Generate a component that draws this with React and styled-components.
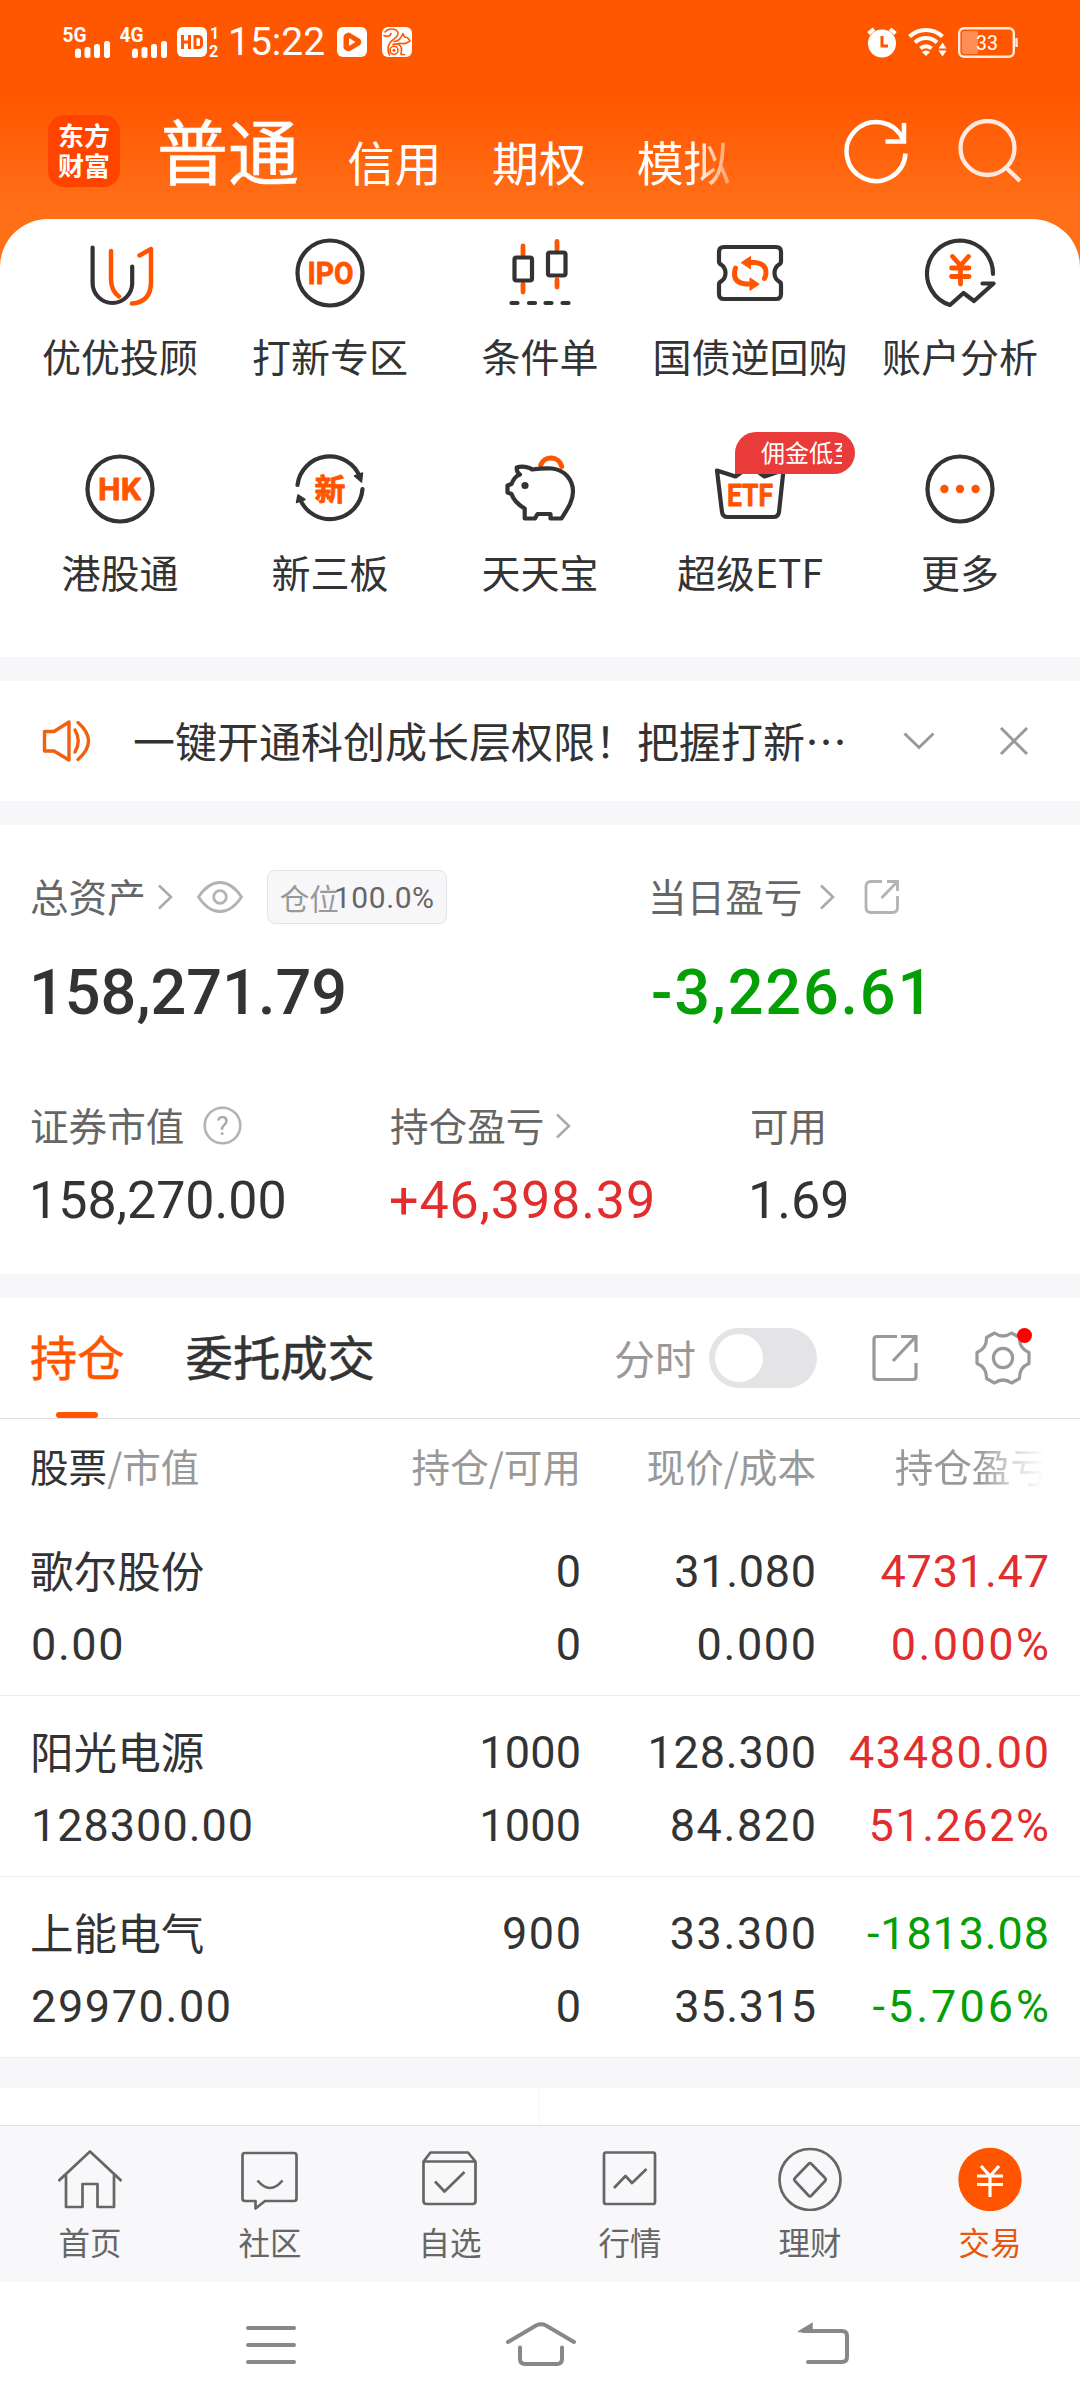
import React from "react";
import styled, { createGlobalStyle, css } from "styled-components";

const CJK = `"Noto Sans CJK SC", "Noto Sans", sans-serif`;
const NUM = `Roboto, "Noto Sans CJK SC", sans-serif`;

const ORANGE = "#ff5500";
const INK = "#333333";
const GRAY = "#999999";
const MID = "#666666";
const RED = "#e12d2d";
const GREEN = "#049f04";

const GlobalStyle = createGlobalStyle`
  *, *::before, *::after { box-sizing: border-box; }
  body { margin: 0; background: #ffffff; font-family: ${CJK}; color: ${INK}; }
  svg { display: block; flex: none; }
`;

const Screen = styled.div`
  width: 1080px;
  height: 2408px;
  overflow: hidden;
  display: flex;
  flex-direction: column;
  background: #fff;
`;

/* ---------- header ---------- */

const Header = styled.header`
  height: 279px;
  flex: none;
  background: linear-gradient(180deg, #ff5700 0, #ff5700 98px, #ff6f18 205px, #ff6f18 100%);
`;

const StatusBar = styled.div`
  height: 84px;
  padding: 0 62px 0 63px;
  display: flex;
  align-items: center;
  justify-content: space-between;
  color: #fff;
`;

const StatusGroup = styled.div`
  display: flex;
  align-items: center;
  gap: ${(p) => p.$gap || 0}px;
`;

const Clock = styled.span`
  font: 400 39px/48px ${NUM};
  margin: 0 12px 0 5px;
`;

const AccountBar = styled.div`
  height: 135px;
  padding: 0 58px 0 48px;
  display: flex;
  align-items: center;
`;

const Logo = styled.div`
  width: 72px;
  height: 72px;
  flex: none;
  margin-bottom: 1px;
  padding-bottom: 2px;
  border-radius: 16px;
  background: #ff4400;
  color: #fff;
  display: flex;
  flex-direction: column;
  align-items: center;
  justify-content: center;
  font: 700 26px/30px ${CJK};
`;

const AccountTabs = styled.nav`
  flex: 1;
  margin-left: 37px;
  padding-top: 4px;
  display: flex;
  align-items: baseline;
  gap: 50.5px;
  color: #fff;
`;

const AccountTab = styled.span`
  font-family: ${CJK};
  font-weight: 400;
  font-size: ${(p) => (p.$active ? 71 : 47)}px;
  line-height: 80px;
  ${(p) =>
    p.$active
      ? css`
          margin-right: -2px;
          -webkit-text-stroke: 0.6px #fff;
        `
      : css`
          padding-top: 2px;
          transform: translateY(1.5px);
        `}
  ${(p) =>
    p.$fade &&
    css`
      mask-image: linear-gradient(90deg, #000 60%, rgba(0, 0, 0, 0.35) 100%);
    `}
`;

const HeaderActions = styled.div`
  display: flex;
  align-items: center;
  gap: 46px;
`;

/* ---------- services ---------- */

const Services = styled.section`
  flex: none;
  height: 438px;
  margin-top: -60px;
  padding: 18px 15px 0;
  border-radius: 48px 48px 0 0;
  background: #fff;
  display: grid;
  grid-template-columns: repeat(5, 210px);
  grid-template-rows: 216px 216px;
`;

const Service = styled.div`
  display: flex;
  flex-direction: column;
  align-items: center;
  gap: 25.5px;
`;

const ServiceIcon = styled.div`
  position: relative;
  width: 72px;
  height: 72px;
`;

const ServiceLabel = styled.span`
  font: 400 39px/40px ${CJK};
  white-space: nowrap;
`;

const Badge = styled.span`
  position: absolute;
  left: 21px;
  top: -21px;
  width: 120px;
  height: 42px;
  padding: 0 13px 0 26px;
  border-radius: 21px 21px 21px 0;
  background: #ea3b3b;
`;

const BadgeText = styled.span`
  display: block;
  overflow: hidden;
  white-space: nowrap;
  color: #fff;
  font: 400 24px/39px ${CJK};
`;

const Gap = styled.div`
  flex: none;
  height: ${(p) => p.$h}px;
  background: #f7f7fa;
`;

/* ---------- notice ---------- */

const Notice = styled.section`
  flex: none;
  height: 120px;
  padding: 0 51px 0 42px;
  display: flex;
  align-items: center;
`;

const NoticeText = styled.p`
  flex: 1;
  margin: 0 0 2px 41px;
  font: 400 42px/60px ${CJK};
  white-space: nowrap;
`;

const NoticeActions = styled.div`
  display: flex;
  align-items: center;
  gap: 64px;
`;

/* ---------- assets ---------- */

const Assets = styled.section`
  flex: none;
  height: 449px;
  padding: 44px 31px 0;
`;

const Split = styled.div`
  display: grid;
  grid-template-columns: ${(p) => p.$cols};
  margin-top: ${(p) => p.$top || 0}px;
`;

const Metric = styled.div`
  display: flex;
  flex-direction: column;
`;

const MetricHead = styled.div`
  height: 55px;
  display: flex;
  align-items: center;
  color: ${MID};
  font: 400 38.6px/50px ${CJK};
  white-space: nowrap;
`;

const MetricLabel = styled.span`
  margin: 0 ${(p) => p.$gap || 0}px 4px -1px;
`;

const MetricValue = styled.div`
  font-family: ${NUM};
  font-weight: ${(p) => (p.$big ? 500 : 400)};
  font-size: ${(p) => (p.$big ? 63 : 52)}px;
  line-height: ${(p) => (p.$big ? 70 : 60)}px;
  margin-top: ${(p) => (p.$big ? 34 : 18)}px;
  color: ${(p) => p.$color || INK};
  letter-spacing: ${(p) => p.$track || 0}px;
  margin-left: ${(p) => (p.$shift === undefined ? -2 : p.$shift)}px;
`;

const Spacer = styled.span`
  width: ${(p) => p.$w}px;
  flex: none;
`;

const Position = styled.span`
  width: 180px;
  height: 54px;
  margin-left: 24px;
  padding-left: 12px;
  border: 1.5px solid #e2e3e6;
  border-radius: 8px;
  background: #f7f7fa;
  display: flex;
  align-items: center;
  font: 400 29.5px/48px ${CJK};
  color: ${GRAY};
`;

const PositionRate = styled.span`
  margin: 2px 0 0 -5px;
  font: 400 30px/50px ${NUM};
  letter-spacing: 0.6px;
  color: ${MID};
`;

/* ---------- holdings ---------- */

const TabBar = styled.div`
  flex: none;
  height: 121px;
  padding: 0 48px 0 31px;
  border-bottom: 1.5px solid #dddddf;
  display: flex;
  align-items: stretch;
`;

const Tab = styled.div`
  margin-right: 62px;
  display: flex;
  flex-direction: column;
  align-items: center;
  justify-content: space-between;
  color: ${(p) => (p.$active ? ORANGE : INK)};
  font: 400 47.3px/70px ${CJK};
  -webkit-text-stroke: 0.5px currentColor;
  padding-top: 23px;
  margin-left: -1px;

  &::after {
    content: "";
    width: 42px;
    height: 6px;
    border-radius: 3px;
    background: ${(p) => (p.$active ? ORANGE : "transparent")};
  }
`;

const Tools = styled.div`
  margin-left: auto;
  display: flex;
  align-items: center;
  height: 120px;
`;

const ToolLabel = styled.span`
  font: 400 41px/60px ${CJK};
  color: ${GRAY};
  margin: 0 13px 3px 0;
`;

const Toggle = styled.span`
  width: 108px;
  height: 60px;
  margin-right: 55px;
  padding: 6px;
  border-radius: 30px;
  background: #e4e4e7;

  &::before {
    content: "";
    display: block;
    width: 48px;
    height: 48px;
    border-radius: 50%;
    background: #fff;
  }
`;

const SettingsButton = styled.span`
  position: relative;
  margin-left: 56px;
`;

const Dot = styled.i`
  position: absolute;
  right: 0;
  top: -2px;
  width: 15px;
  height: 15px;
  border-radius: 50%;
  background: #ff0000;
`;

const columns = css`
  display: grid;
  grid-template-columns: 320px 230px 235px 233px;
  padding: 0 31px;
`;

const TableHead = styled.div`
  ${columns}
  flex: none;
  height: 96px;
  font: 400 38.6px/93px ${CJK};
  color: ${GRAY};
  white-space: nowrap;
`;

const HeadCell = styled.span`
  text-align: ${(p) => (p.$left ? "left" : "right")};
  margin-left: ${(p) => (p.$left ? -1 : 0)}px;
  ${(p) =>
    p.$fade &&
    css`
      mask-image: linear-gradient(90deg, #000 70%, rgba(0, 0, 0, 0.35) 86%, transparent 98%);
    `}
`;

const Strong = styled.span`
  color: ${INK};
`;

const Row = styled.div`
  ${columns}
  flex: none;
  height: 181px;
  padding-top: 21px;
  border-bottom: 1.5px solid #ececee;
`;

const Cell = styled.div`
  display: flex;
  flex-direction: column;
  align-items: ${(p) => (p.$left ? "flex-start" : "flex-end")};
  color: ${(p) => p.$color || INK};
  white-space: nowrap;
`;

const FigureText = styled.span`
  font: 400 45px/72.5px ${NUM};
  letter-spacing: ${(p) => p.$track}px;
  margin-right: ${(p) => -p.$track}px;
`;

const StockName = styled.span`
  margin-left: -1px;
  font: 400 43.6px/67px ${CJK};
  height: 72.5px;
`;

const NextSection = styled.div`
  flex: none;
  height: 37px;
  display: grid;
  grid-template-columns: 540px 540px;
`;

const NextHalf = styled.div`
  border-right: 1px solid ${(p) => (p.$line ? "#f6f6f7" : "transparent")};
`;

/* ---------- bottom ---------- */

const BottomNav = styled.nav`
  flex: none;
  height: 157px;
  padding-top: 21px;
  border-top: 1.5px solid #e2e2e5;
  background: #f8f8fb;
  display: grid;
  grid-template-columns: repeat(6, 180px);
`;

const NavItem = styled.div`
  display: flex;
  flex-direction: column;
  align-items: center;
  gap: 10px;
  font: 400 31.5px/40px ${CJK};
  color: ${(p) => (p.$active ? "#e8570f" : MID)};
`;

const SystemNav = styled.div`
  flex: none;
  height: 126px;
  display: grid;
  grid-template-columns: 246px 260px 292px 1fr;
  align-items: center;
`;

/* ---------- icons ---------- */

const Signal = ({ label }) => (
  <svg width="48" height="34" viewBox="0 0 48 34" fill="#fff">
    <text x="-0.5" y="17" fontFamily="Roboto" fontWeight="700" fontSize="19.5" textLength="24" lengthAdjust="spacingAndGlyphs">
      {label}
    </text>
    <rect x="12" y="23.5" width="6" height="9.5" rx="2.5" />
    <rect x="21.5" y="22" width="6" height="11" rx="2.5" />
    <rect x="31" y="19" width="6" height="14" rx="2.5" />
    <rect x="41" y="16" width="6" height="17" rx="2.5" />
  </svg>
);

const HdIcon = () => (
  <svg width="46" height="38" viewBox="0 -4 46 38">
    <rect width="30" height="30" rx="6" fill="#fff" />
    <g fill="none" stroke={ORANGE} strokeWidth="3">
      <path d="M5.5 8v14M12.5 8v14M5.5 15h7M18 9.5h3.5a3 3 0 0 1 3 3v5a3 3 0 0 1-3 3H18z" />
    </g>
    <g fill="#fff" fontFamily="Roboto" fontWeight="700" fontSize="16">
      <text x="33" y="11.5">1</text>
      <text x="32" y="29.5">2</text>
    </g>
  </svg>
);

const PlayIcon = () => (
  <svg width="30" height="30" viewBox="0 0 30 30">
    <rect width="30" height="30" rx="6" fill="#fff" />
    <path d="M13 6q-1.500-.800-3 0l-2 1.200q-1.500 1-1.500 2.500v10.600q0 1.500 1.500 2.500l2 1.200q1.500.800 3 0l10-6q2.500-3 0-6z" fill={ORANGE} />
    <path d="M12 11l6.500 4-6.500 4z" fill="#fff" />
  </svg>
);

const SquirrelIcon = () => (
  <svg width="30" height="30" viewBox="0 0 30 30">
    <rect width="30" height="30" rx="6" fill="#fff" />
    <g fill="none" stroke={ORANGE} strokeWidth="1.6" strokeLinecap="round" strokeLinejoin="round">
      <path d="M3 5C6 .8 14 1 16 5.500 17 10 11 12 8.500 15c-3 4-3 9-1 13" />
      <path d="M2 8.500c2.500 1.500 6.500 1 7-2" />
      <path d="M12 14.500c5 0 7-3.500 9-8l1.500 3.500c3 0 4.500 1.500 5.500 4l-4.500 2.500c-2.500.5-5-.5-7 0" />
      <path d="M11 17.500c5-2 9 1 8.500 5.500L19 27.500h3.500" />
      <circle cx="12" cy="23.300" r="4" />
    </g>
    <circle cx="12" cy="23.300" r="1.500" fill={ORANGE} />
  </svg>
);

const AlarmIcon = () => (
  <svg width="30" height="31" viewBox="0 0 30 31">
    <circle cx="15" cy="16.500" r="14" fill="#fff" />
    <path d="M1.500 6.500l5.500-4.500M28.500 6.500L23 2" stroke="#fff" strokeWidth="4" />
    <path d="M15 9v10h6" fill="none" stroke={ORANGE} strokeWidth="3" />
  </svg>
);

const WifiIcon = () => (
  <svg width="39" height="30" viewBox="0 0 39 30">
    <g fill="none" stroke="#fff" strokeWidth="4">
      <path d="M1.500 9.500a24 24 0 0 1 33 0" />
      <path d="M7 15.500a16 16 0 0 1 22 0" />
      <path d="M12.500 21.500a8 8 0 0 1 11 0" />
    </g>
    <path d="M18 29l-4-4q4-3 8 0z" fill="#fff" />
    <path d="M34.500 15.500l4 6h-8zM34.500 29.500l4-6h-8z" fill="#fff" />
  </svg>
);

const BatteryIcon = () => (
  <svg width="60" height="31" viewBox="0 0 60 31">
    <rect x="1.200" y="1.200" width="54.600" height="28.600" rx="5" fill="none" stroke="#ffece0" strokeWidth="2.400" />
    <rect x="4" y="4" width="16" height="23" rx="2" fill="#ff8c52" />
    <path d="M58.500 11v9" stroke="#ffece0" strokeWidth="2.400" />
    <text x="18" y="22.500" fontFamily="Roboto" fontSize="19.500" fill="#fff">33</text>
  </svg>
);

const RefreshIcon = () => (
  <svg width="66" height="66" viewBox="0 0 66 66" fill="none" stroke="#fff" strokeWidth="4.500">
    <path d="M61.500 34.500A29.500 29.500 0 1 1 59 20.500" />
    <path d="M60 4v18.500H41.500" />
  </svg>
);

const SearchIcon = () => (
  <svg width="66" height="66" viewBox="0 0 66 66" fill="none" stroke="#ffe9de" strokeWidth="4.300">
    <circle cx="31.500" cy="29" r="27" />
    <path d="M50 48.500L64 62" />
  </svg>
);

const Glyph = ({ children }) => (
  <svg width="72" height="72" viewBox="0 0 72 72" fill="none" stroke={INK} strokeWidth="4.200" strokeLinecap="round" strokeLinejoin="round">
    {children}
  </svg>
);

const Wordmark = ({ text, x, y, width, size = 32, font = "Roboto" }) => (
  <text x={x} y={y} fontFamily={font} fontWeight="700" fontSize={size} fill={ORANGE} stroke={ORANGE} strokeWidth="0.8" textLength={width} lengthAdjust="spacingAndGlyphs">
    {text}
  </text>
);

const glyphs = {
  advisor: (
    <Glyph>
      <path d="M8.600 10.500V46A19.800 20 0 0 0 48.200 46V29.500" />
      <g stroke={ORANGE} strokeWidth="4.500">
        <path d="M27 14v28q0 12 8 17.500" />
        <path d="M55.500 18.500L67 12v33q0 20-19 21.500" />
      </g>
    </Glyph>
  ),
  ipo: (
    <Glyph>
      <circle cx="36" cy="36" r="32.500" />
      <Wordmark text="IPO" x={13.5} y={47} width={46} />
    </Glyph>
  ),
  candles: (
    <Glyph>
      <path d="M19 9v9M19 47v8M53 4.500v8M53 43v7" stroke={ORANGE} strokeWidth="4.800" />
      <rect x="10.500" y="20.500" width="17.500" height="23" rx="2" />
      <rect x="44" y="15.500" width="17.500" height="23" rx="2" />
      <path d="M7.500 66h6M25 66h6M41.500 66h6M58.500 66h6" />
    </Glyph>
  ),
  bond: (
    <Glyph>
      <path d="M10 10h52q5 0 5 5v9.500q0 2-2 3-4.500 3-4.500 8.500t4.500 8.500q2 1 2 3V57q0 5-5 5H10q-5 0-5-5v-9.500q0-2 2-3 4.500-3 4.500-8.500T7 27.500q-2-1-2-3V15q0-5 5-5z" />
      <g stroke={ORANGE} strokeWidth="5">
        <path d="M34 25.500h7q11 1 11 10 0 3-1.500 6" />
        <path d="M38 47h-6q-11.500-1-11.500-10 0-3 1-6" />
      </g>
      <path d="M27.500 25.500l9-6v12zM45 47l-9-6v12z" fill={ORANGE} stroke={ORANGE} strokeWidth="1" />
    </Glyph>
  ),
  analysis: (
    <Glyph>
      <path d="M69 37A33 33 0 1 0 26 68L39.500 56 50 64 69.500 46.500H58.500" />
      <path d="M28.500 19.500l8 9 8-9M27.500 31h17.500M27.500 39.500h17.500M36.500 29v18" stroke={ORANGE} strokeWidth="4.800" />
    </Glyph>
  ),
  hk: (
    <Glyph>
      <circle cx="36" cy="36" r="32.500" />
      <Wordmark text="HK" x={14} y={47} width={43} />
    </Glyph>
  ),
  neeq: (
    <Glyph>
      <path d="M3.500 32A32.500 32.500 0 0 1 66 24M68.500 36A32.500 32.500 0 0 1 6 46" />
      <path d="M60.500 23l8-3L67.500 29zM4 42l-1.500 7.500 8.500-3z" fill={INK} strokeWidth="1.500" />
      <Wordmark text="新" x={20.5} y={47} width={31} size={30} font="Noto Sans CJK SC" />
    </Glyph>
  ),
  piggy: (
    <Glyph>
      <path d="M36.700 12A11 11 0 0 1 57.700 13.500" stroke={ORANGE} strokeWidth="5" />
      <path d="M12.700 14.500C17 13 25 13.500 28 16.500c7-1 14-1.500 20-1C61 17 69 27 69 38.500c0 10-6 18-11.500 27h-11V61h-13l-2.500 4.500H20.700v-10C13 51 9.500 47 7.500 41l-4-1.500v-7l4-1.500c1.500-4 4-8 8.500-9.500-2.500-1.500-3.500-4-3.300-7z" />
      <circle cx="21" cy="32.500" r="3.600" fill={INK} stroke="none" />
    </Glyph>
  ),
  etf: (
    <Glyph>
      <path d="M3 17.500L21.500 23.500 36 13l14.500 10.500L69.500 17 65 59q-.600 5-5.500 5H13.500Q8.600 64 8 59z" />
      <Wordmark text="ETF" x={13} y={53} width={46} />
    </Glyph>
  ),
  more: (
    <Glyph>
      <circle cx="36" cy="36" r="32.500" />
      <g fill={ORANGE} stroke="none">
        <circle cx="20.400" cy="36" r="4.200" />
        <circle cx="36" cy="36" r="4.200" />
        <circle cx="51.600" cy="36" r="4.200" />
      </g>
    </Glyph>
  ),
};

const SpeakerIcon = () => (
  <svg width="50" height="44" viewBox="0 0 50 44" fill="none" stroke="#f0600f" strokeWidth="3.400" strokeLinejoin="round" strokeLinecap="round">
    <path d="M2.500 12.500H12L27 3v38L12 32H2.500z" />
    <path d="M33 11q6.500 11 0 22M36 3.500q21 18.500 0 37" />
  </svg>
);

const ChevronDown = () => (
  <svg width="32" height="18" viewBox="0 0 32 18" fill="none" stroke={GRAY} strokeWidth="3">
    <path d="M1.500 1.500L16 15.500 30.500 1.500" />
  </svg>
);

const CloseIcon = () => (
  <svg width="30" height="30" viewBox="0 0 30 30" fill="none" stroke={GRAY} strokeWidth="3">
    <path d="M2 2l26 26M28 2L2 28" />
  </svg>
);

const ChevronRight = () => (
  <svg width="16" height="26" viewBox="0 0 16 26" fill="none" stroke="#aaaaaa" strokeWidth="2.600">
    <path d="M2 1.500L14 13 2 24.500" />
  </svg>
);

const EyeIcon = () => (
  <svg width="46" height="32" viewBox="0 0 46 32" fill="none" stroke="#b3b3b3" strokeWidth="2.800">
    <path d="M1.500 16Q11 1.500 23 1.500T44.500 16Q35 30.500 23 30.500T1.500 16z" />
    <circle cx="23" cy="16" r="6.300" />
  </svg>
);

const HelpIcon = () => (
  <svg width="39" height="39" viewBox="0 0 39 39">
    <circle cx="19.500" cy="19.500" r="17.800" fill="none" stroke="#b3b3b3" strokeWidth="2.600" />
    <text x="19.500" y="28.500" textAnchor="middle" fontFamily="Roboto" fontSize="26" fill="#a6a6a6">?</text>
  </svg>
);

const ShareSmall = () => (
  <svg width="36" height="36" viewBox="0 0 36 36" fill="none" stroke="#b3b3b3" strokeWidth="2.800">
    <path d="M18 2.500H7q-5 0-5 5v21q0 5 5 5h21.500q5 0 5-5V17" />
    <path d="M23 2.500h10.500V12M33 3L17.500 19" />
  </svg>
);

const ShareLarge = () => (
  <svg width="46" height="48" viewBox="0 0 46 48" fill="none" stroke={GRAY} strokeWidth="3.200">
    <path d="M25 2.500H5q-3 0-3 3v37q0 3 3 3h36q3 0 3-3V29" />
    <path d="M29 2.500h15V18M43.500 3L21 27" />
  </svg>
);

const GearIcon = () => (
  <svg width="58" height="56" viewBox="0 0 58 56" fill="none" stroke={GRAY} strokeWidth="3.200" strokeLinejoin="round">
    <path d="M20.500 3Q29 9 37.500 3l8 4.500Q45 18.500 55 22.500v11Q45 37.500 45.500 48.500l-8 4.500Q29 47 20.500 53l-8-4.500Q13 37.500 3 33.500v-11Q13 18.500 12.500 7.500z" />
    <circle cx="29" cy="28" r="9.600" />
  </svg>
);

const TabGlyph = ({ children }) => (
  <svg width="64" height="64" viewBox="0 0 64 64" fill="none" stroke={MID} strokeWidth="2.700" strokeLinejoin="round">
    {children}
  </svg>
);

const tabs = [
  {
    label: "首页",
    icon: <path d="M.500 34L32 4.500 63.500 34M8 28v32h16.500V37H39.500v23H56V28" />,
  },
  {
    label: "社区",
    icon: <path d="M7 6h49q2.500 0 2.500 2.500v43q0 2.500-2.500 2.500H27l-9.500 7.500V54H7q-2.500 0-2.500-2.500v-43Q4.500 6 7 6zM19.500 33.500q12.500 15 25 0" />,
  },
  {
    label: "自选",
    icon: <path d="M5.500 14.500L12.500 5.500h37.500l7.500 9V54q0 3-3 3h-46q-3 0-3-3zh52M17 34.500l9.500 10L46.500 25" />,
  },
  {
    label: "行情",
    icon: <path d="M8 5.500h47q2 0 2 2v47.500q0 2-2 2H8q-2 0-2-2V7.500q0-2 2-2zM16 41l11.500-12 6.500 7 14.500-14" />,
  },
  {
    label: "理财",
    icon: (
      <>
        <circle cx="32" cy="32.500" r="30.500" />
        <path d="M30.500 17q1.500-1.500 3 0L47 31q1.500 1.500 0 3L33.500 48.500q-1.500 1.500-3 0L17 34q-1.500-1.500 0-3z" />
      </>
    ),
  },
  {
    label: "交易",
    active: true,
    icon: (
      <>
        <circle cx="32" cy="32.500" r="31.700" fill={ORANGE} stroke="none" />
        <path d="M23 19l9 10 9-10M19 29h26M19 37.500h26M32 28v22" stroke="#fff" strokeWidth="3.200" />
      </>
    ),
  },
];

const MenuKey = () => (
  <svg width="50" height="46" viewBox="0 0 50 46" stroke="#888" strokeWidth="4" strokeLinecap="round">
    <path d="M2 6h46M2 23h46M2 40h46" />
  </svg>
);

const HomeKey = () => (
  <svg width="70" height="46" viewBox="0 0 70 46" fill="none" stroke="#888" strokeWidth="4" strokeLinecap="round">
    <path d="M2 20L30 3.500q5-2.500 10 0L68 20M14 25.500V37q0 5 5 5h32q5 0 5-5V25.500" />
  </svg>
);

const BackKey = () => (
  <svg width="52" height="46" viewBox="0 0 52 46" fill="none" stroke="#888" strokeWidth="4" strokeLinecap="round">
    <path d="M5 9h39q5 0 5 5v21q0 5-5 5H10" />
    <path d="M1 9.500L14 1.500v8z" fill="#888" strokeWidth="1.500" />
  </svg>
);

/* ---------- data ---------- */

const services = [
  { label: "优优投顾", icon: "advisor" },
  { label: "打新专区", icon: "ipo" },
  { label: "条件单", icon: "candles" },
  { label: "国债逆回购", icon: "bond" },
  { label: "账户分析", icon: "analysis" },
  { label: "港股通", icon: "hk" },
  { label: "新三板", icon: "neeq" },
  { label: "天天宝", icon: "piggy" },
  { label: "超级ETF", icon: "etf", badge: "佣金低至" },
  { label: "更多", icon: "more" },
];

const holdings = [
  { name: "歌尔股份", value: "0.00", qty: "0", free: "0", price: "31.080", cost: "0.000", pl: "4731.47", rate: "0.000%", color: RED },
  { name: "阳光电源", value: "128300.00", qty: "1000", free: "1000", price: "128.300", cost: "84.820", pl: "43480.00", rate: "51.262%", color: RED },
  { name: "上能电气", value: "29970.00", qty: "900", free: "0", price: "33.300", cost: "35.315", pl: "-1813.08", rate: "-5.706%", color: GREEN },
];

/* Narrow ones tighten a figure; signs and percent marks open it up. */
const tracking = (text) => {
  const count = (ch) => text.split(ch).length - 1;
  const extra = 1.6 * text.length - 5.5 * count("1") + 5 * count("-") + 5 * count("%");
  return Math.round((extra / text.length) * 100) / 100;
};

const Figure = ({ children }) => <FigureText $track={tracking(children)}>{children}</FigureText>;

export default function App() {
  return (
    <Screen lang="zh-CN">
      <GlobalStyle />
      <Header>
        <StatusBar>
          <StatusGroup>
            <StatusGroup $gap={9}>
              <Signal label="5G" />
              <Signal label="4G" />
              <HdIcon />
            </StatusGroup>
            <Clock>15:22</Clock>
            <StatusGroup $gap={15}>
              <PlayIcon />
              <SquirrelIcon />
            </StatusGroup>
          </StatusGroup>
          <StatusGroup $gap={11}>
            <AlarmIcon />
            <WifiIcon />
            <BatteryIcon />
          </StatusGroup>
        </StatusBar>
        <AccountBar>
          <Logo>
            <span>东方</span>
            <span>财富</span>
          </Logo>
          <AccountTabs>
            <AccountTab $active>普通</AccountTab>
            <AccountTab>信用</AccountTab>
            <AccountTab>期权</AccountTab>
            <AccountTab $fade>模拟</AccountTab>
          </AccountTabs>
          <HeaderActions>
            <RefreshIcon />
            <SearchIcon />
          </HeaderActions>
        </AccountBar>
      </Header>

      <Services>
        {services.map((s) => (
          <Service key={s.label}>
            <ServiceIcon>
              {glyphs[s.icon]}
              {s.badge && (
                <Badge>
                  <BadgeText>{s.badge}</BadgeText>
                </Badge>
              )}
            </ServiceIcon>
            <ServiceLabel>{s.label}</ServiceLabel>
          </Service>
        ))}
      </Services>
      <Gap $h={24} />

      <Notice>
        <SpeakerIcon />
        <NoticeText>一键开通科创成长层权限！把握打新…</NoticeText>
        <NoticeActions>
          <ChevronDown />
          <CloseIcon />
        </NoticeActions>
      </Notice>
      <Gap $h={24} />

      <Assets>
        <Split $cols="618px 1fr">
          <Metric>
            <MetricHead>
              <MetricLabel $gap={11}>总资产</MetricLabel>
              <ChevronRight />
              <Spacer $w={24} />
              <EyeIcon />
              <Position>
                仓位<PositionRate>100.0%</PositionRate>
              </Position>
            </MetricHead>
            <MetricValue $big>158,271.79</MetricValue>
          </Metric>
          <Metric>
            <MetricHead>
              <MetricLabel $gap={17}>当日盈亏</MetricLabel>
              <ChevronRight />
              <Spacer $w={29} />
              <ShareSmall />
            </MetricHead>
            <MetricValue $big $color={GREEN} $track={1.8} $shift={2}>
              -3,226.61
            </MetricValue>
          </Metric>
        </Split>
        <Split $cols="360px 360px 1fr" $top={70}>
          <Metric>
            <MetricHead>
              <MetricLabel $gap={19}>证券市值</MetricLabel>
              <HelpIcon />
            </MetricHead>
            <MetricValue>158,270.00</MetricValue>
          </Metric>
          <Metric>
            <MetricHead>
              <MetricLabel $gap={11}>持仓盈亏</MetricLabel>
              <ChevronRight />
            </MetricHead>
            <MetricValue $color={RED} $track={0.9}>
              +46,398.39
            </MetricValue>
          </Metric>
          <Metric>
            <MetricHead>
              <MetricLabel>可用</MetricLabel>
            </MetricHead>
            <MetricValue $shift={-3}>1.69</MetricValue>
          </Metric>
        </Split>
      </Assets>
      <Gap $h={24} />

      <TabBar>
        <Tab $active>持仓</Tab>
        <Tab>委托成交</Tab>
        <Tools>
          <ToolLabel>分时</ToolLabel>
          <Toggle />
          <ShareLarge />
          <SettingsButton>
            <GearIcon />
            <Dot />
          </SettingsButton>
        </Tools>
      </TabBar>
      <TableHead>
        <HeadCell $left>
          <Strong>股票</Strong>/市值
        </HeadCell>
        <HeadCell>持仓/可用</HeadCell>
        <HeadCell>现价/成本</HeadCell>
        <HeadCell $fade>持仓盈亏</HeadCell>
      </TableHead>
      {holdings.map((h) => (
        <Row key={h.name}>
          <Cell $left>
            <StockName>{h.name}</StockName>
            <Figure>{h.value}</Figure>
          </Cell>
          <Cell>
            <Figure>{h.qty}</Figure>
            <Figure>{h.free}</Figure>
          </Cell>
          <Cell>
            <Figure>{h.price}</Figure>
            <Figure>{h.cost}</Figure>
          </Cell>
          <Cell $color={h.color}>
            <Figure>{h.pl}</Figure>
            <Figure>{h.rate}</Figure>
          </Cell>
        </Row>
      ))}
      <Gap $h={30} />
      <NextSection>
        <NextHalf $line />
        <NextHalf />
      </NextSection>

      <BottomNav>
        {tabs.map((t) => (
          <NavItem key={t.label} $active={t.active}>
            <TabGlyph>{t.icon}</TabGlyph>
            {t.label}
          </NavItem>
        ))}
      </BottomNav>
      <SystemNav>
        <span />
        <MenuKey />
        <HomeKey />
        <BackKey />
      </SystemNav>
    </Screen>
  );
}
